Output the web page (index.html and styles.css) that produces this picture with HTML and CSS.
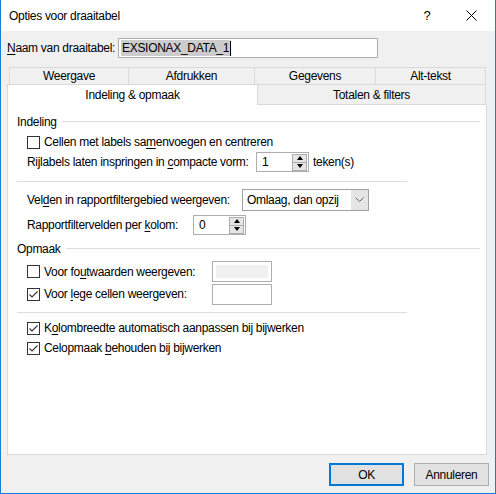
FILE: index.html
```html
<!DOCTYPE html>
<html lang="nl">

<head>
  <meta charset="UTF-8" />
  <meta name="viewport" content="width=device-width, initial-scale=1.0" />
  <title>Opties voor draaitabel</title>
  <link rel="stylesheet" href="styles.css">
</head>

<body>
  <div class="dialog">
    <div class="titlebar">
      <span class="title">Opties voor draaitabel</span>
      <span class="help">?</span>
      <span class="close">
        <svg width="11" height="11" viewBox="0 0 11 11">
          <path d="M0.5 0.5 L10.5 10.5 M10.5 0.5 L0.5 10.5" stroke="#000" stroke-width="1" fill="none" />
        </svg>
      </span>
    </div>

    <div class="content">
      <div class="name-row">
        <label class="name-label" for="naam"><u>N</u>aam van draaitabel:</label>
        <div class="name-input" id="naam"><span class="selected">EXSIONAX_DATA_1</span><span class="caret"></span></div>
      </div>

      <div class="tabs">
        <div class="tab-row back">
          <div class="tab t-weergave">Weergave</div>
          <div class="tab t-afdrukken">Afdrukken</div>
          <div class="tab t-gegevens">Gegevens</div>
          <div class="tab t-alt">Alt-tekst</div>
        </div>
        <div class="tab-row front">
          <div class="tab active t-indeling">Indeling &amp; opmaak</div>
          <div class="tab t-totalen">Totalen &amp; filters</div>
        </div>
      </div>

      <div class="panel">
        <!-- Indeling -->
        <div class="group-title"><span>Indeling</span><div class="group-line"></div></div>
        <div class="row r-cellen">
          <span class="check"></span>
          <span>Cellen met labels sa<u>m</u>envoegen en centreren</span>
        </div>
        <div class="row r-rij">
          <span class="lbl w-rij">Rijlabels laten inspringen in <u>c</u>ompacte vorm:</span>
          <div class="spinner">
            <span class="spin-value">1</span>
            <div class="spin-buttons">
              <span class="spin-btn"><i class="arrow-up"></i></span>
              <span class="spin-btn"><i class="arrow-down"></i></span>
            </div>
          </div>
          <span class="after">teken(s)</span>
        </div>

        <div class="separator s-first"></div>

        <div class="row r-velden">
          <span class="lbl w-velden">Vel<u>d</u>en in rapportfiltergebied weergeven:</span>
          <div class="select">
            <span class="select-value">Omlaag, dan opzij</span>
            <span class="select-btn">
              <svg width="9" height="5" viewBox="0 0 9 5">
                <path d="M0.5 0.5 L4.5 4.5 L8.5 0.5" stroke="#606060" stroke-width="1" fill="none" />
              </svg>
            </span>
          </div>
        </div>
        <div class="row r-rapport">
          <span class="lbl w-rapport">Rapportfiltervelden per <u>k</u>olom:</span>
          <div class="spinner">
            <span class="spin-value">0</span>
            <div class="spin-buttons">
              <span class="spin-btn"><i class="arrow-up"></i></span>
              <span class="spin-btn"><i class="arrow-down"></i></span>
            </div>
          </div>
        </div>

        <!-- Opmaak -->
        <div class="group-title g-opmaak"><span>Opmaak</span><div class="group-line"></div></div>
        <div class="row r-fout">
          <span class="check-lbl w-check">
            <span class="check"></span>
            <span>Voor fo<u>u</u>twaarden weergeven:</span>
          </span>
          <div class="textbox disabled"><span class="fill"></span></div>
        </div>
        <div class="row r-lege">
          <span class="check-lbl w-check">
            <span class="check checked">
              <svg width="11" height="11" viewBox="0 0 11 11">
                <path d="M1.5 5.5 L4 8 L9.5 2.5" stroke="#333" stroke-width="1.1" fill="none" />
              </svg>
            </span>
            <span>Voor <u>l</u>ege cellen weergeven:</span>
          </span>
          <div class="textbox"></div>
        </div>

        <div class="separator s-second"></div>

        <div class="row r-kolom">
          <span class="check checked">
            <svg width="11" height="11" viewBox="0 0 11 11">
              <path d="M1.5 5.5 L4 8 L9.5 2.5" stroke="#333" stroke-width="1.1" fill="none" />
            </svg>
          </span>
          <span>K<u>o</u>lombreedte automatisch aanpassen bij bijwerken</span>
        </div>
        <div class="row r-cel">
          <span class="check checked">
            <svg width="11" height="11" viewBox="0 0 11 11">
              <path d="M1.5 5.5 L4 8 L9.5 2.5" stroke="#333" stroke-width="1.1" fill="none" />
            </svg>
          </span>
          <span>Celopmaak <u>b</u>ehouden bij bijwerken</span>
        </div>
      </div>

      <div class="buttons">
        <button class="btn default">OK</button>
        <button class="btn">Annuleren</button>
      </div>
    </div>
  </div>
</body>

</html>
```

FILE: styles.css
```css
* {
  box-sizing: border-box;
}

body {
  margin: 0;
  font-family: "Liberation Sans", Arial, sans-serif;
  font-size: 12px;
  letter-spacing: -0.3px;
  color: #000;
  white-space: nowrap;
}

u {
  text-decoration-thickness: 1px;
  text-underline-offset: 2px;
}

.dialog {
  width: 496px;
  height: 494px;
  border: 1px solid #1a7dd7;
  border-top: 0;
  background: #f0f0f0;
  display: flex;
  flex-direction: column;
}

/* title bar */
.titlebar {
  height: 31px;
  background: #fff;
  display: flex;
  align-items: center;
  padding-left: 8px;
}

.title {
  flex: 1;
}

.help {
  width: 46px;
  text-align: center;
  font-size: 13px;
}

.close {
  width: 45px;
  display: flex;
  justify-content: center;
  padding-right: 2px;
}

.content {
  padding: 0 8px 0 6px;
  display: flex;
  flex-direction: column;
}

/* naam */
.name-row {
  margin-top: 7px;
  height: 20px;
  display: flex;
  align-items: center;
}

.name-label {
  width: 111px;
  flex: none;
}

.name-input {
  width: 260px;
  height: 20px;
  border: 1px solid #adadad;
  background: #fff;
  display: flex;
  align-items: center;
  padding-left: 2px;
}

.selected {
  background: #cccccc;
  padding: 1px;
  line-height: 14px;
}

.caret {
  width: 1px;
  height: 15px;
  background: #000;
}

/* tabs */
.tabs {
  margin-top: 9px;
}

.tab-row {
  display: flex;
}

.tab-row.back {
  margin-left: 2px;
  height: 18px;
}

.tab-row.front {
  margin-top: -1px;
  height: 21px;
}

.tab {
  border: 1px solid #d9d9d9;
  background: #f0f0f0;
  text-align: center;
  margin-left: -1px;
}

.tab:first-child {
  margin-left: 0;
}

.back .tab {
  line-height: 16px;
}

.front .tab {
  line-height: 20px;
}

.t-weergave { width: 120px; }
.t-afdrukken { width: 127px; }
.t-gegevens { width: 122px; }
.t-alt { width: 111px; }
.t-indeling { width: 251px; }
.t-totalen { width: 229px; }

.tab.active {
  background: #fff;
  border-bottom: 0;
}

/* panel */
.panel {
  width: 480px;
  height: 350px;
  background: #fff;
  border: 1px solid #d9d9d9;
  border-top: 0;
  padding: 8px 6px 0 9px;
}

.group-title {
  height: 18px;
  display: flex;
  align-items: center;
  gap: 5px;
}

.group-line {
  flex: 1;
  height: 1px;
  background: #dcdcdc;
  margin-top: -1px;
}

.g-opmaak {
  margin-top: 5px;
}

.row {
  display: flex;
  align-items: center;
  padding-left: 10px;
}

.r-cellen { margin-top: 1px; height: 20px; }
.r-rij { height: 20px; }
.r-velden { height: 21px; }
.r-rapport { margin-top: 5px; height: 20px; }
.r-fout { margin-top: 3px; height: 21px; }
.r-lege { margin-top: 2px; height: 20px; }
.r-kolom { margin-top: 5px; height: 20px; }
.r-cel { height: 20px; }

.separator {
  width: 390px;
  height: 1px;
  background: #dcdcdc;
}

.s-first { margin: 9px 0 7px; }
.s-second { margin: 8px 0 5px; }

.lbl {
  display: block;
  flex: none;
}

.check-lbl {
  display: flex;
  align-items: center;
  flex: none;
}

.w-rij { width: 229px; }
.w-velden { width: 215px; }
.w-rapport { width: 166px; }
.w-check { width: 185px; }

.check {
  width: 13px;
  height: 13px;
  border: 1px solid #333;
  background: #fff;
  margin-right: 4px;
  flex: none;
  display: flex;
  align-items: center;
  justify-content: center;
}

/* spinner */
.spinner {
  width: 53px;
  height: 20px;
  border: 1px solid #adadad;
  background: #fff;
  display: flex;
  align-items: center;
  padding: 0 1px 0 5px;
}

.spin-value {
  flex: 1;
}

.spin-buttons {
  width: 15px;
  height: 17px;
  display: flex;
  flex-direction: column;
}

.spin-btn {
  flex: 1;
  background: #e5e5e5;
  border: 1px solid #adadad;
  display: flex;
  align-items: center;
  justify-content: center;
}

.spin-btn + .spin-btn {
  border-top: 0;
}

.arrow-up {
  border-left: 3px solid transparent;
  border-right: 3px solid transparent;
  border-bottom: 4px solid #000;
}

.arrow-down {
  border-left: 3px solid transparent;
  border-right: 3px solid transparent;
  border-top: 4px solid #000;
}

.after {
  margin-left: 4px;
}

/* dropdown */
.select {
  width: 127px;
  height: 22px;
  border: 1px solid #a0a0a0;
  background: #fff;
  display: flex;
  align-items: center;
  padding-left: 4px;
}

.select-value {
  flex: 1;
}

.select-btn {
  width: 17px;
  height: 20px;
  background: #e5e5e5;
  display: flex;
  align-items: center;
  justify-content: center;
}

/* tekstvakken */
.textbox {
  width: 60px;
  height: 21px;
  border: 1px solid #adadad;
  background: #fff;
}

.textbox.disabled {
  padding: 3px;
}

.textbox .fill {
  display: block;
  height: 100%;
  background: #f0f0f0;
}

/* knoppen */
.buttons {
  margin-top: 8px;
  margin-right: -2px;
  display: flex;
  justify-content: flex-end;
  gap: 10px;
}

.btn {
  width: 75px;
  height: 23px;
  background: #e1e1e1;
  border: 1px solid #adadad;
  font-family: inherit;
  font-size: 12px;
  letter-spacing: inherit;
  color: #000;
  padding: 0;
}

.btn.default {
  border: 2px solid #0078d7;
}
```
